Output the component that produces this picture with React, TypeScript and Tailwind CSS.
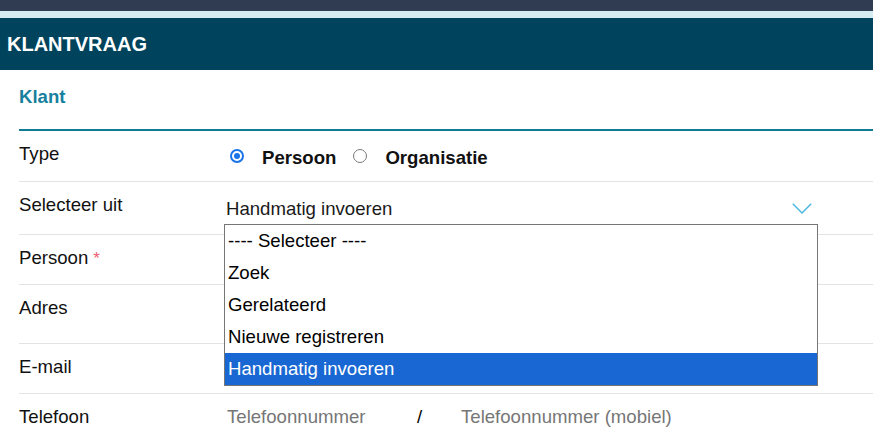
import React from "react";

function Radio({ checked }: { checked: boolean }) {
  return checked ? (
    <span className="w-[14px] h-[14px] mb-[4px] rounded-full border-2 border-[#1a73e8] flex items-center justify-center shrink-0">
      <span className="w-[6px] h-[6px] rounded-full bg-[#1a73e8]" />
    </span>
  ) : (
    <span className="w-[14px] h-[14px] mb-[4px] rounded-full border border-[#7a7a7a] bg-white shrink-0" />
  );
}

const options = [
  "---- Selecteer ----",
  "Zoek",
  "Gerelateerd",
  "Nieuwe registreren",
  "Handmatig invoeren",
];

export default function App() {
  return (
    <div className="w-[873px] h-[438px] overflow-hidden bg-white font-['Liberation_Sans',Arial,sans-serif] text-[18.6px] text-[#111]">
      <div className="h-[11px] bg-[#2f3c52]" />
      <div className="h-[7px] bg-[#d4ecef]" />
      <div className="h-[52px] bg-[#00435c] flex items-center px-[7px]">
        <h1 className="text-[20px] font-bold text-white leading-none">KLANTVRAAG</h1>
      </div>
      <div className="pl-[19px]">
        <div className="h-[61px] border-b-2 border-[#0f7b94] pt-[16px]">
          <h2 className="font-bold text-[#17809d] leading-[22px]">Klant</h2>
        </div>

        {/* Type */}
        <div className="h-[51px] border-b border-[#e3e3e3] flex">
          <div className="w-[205px] pt-[12px] leading-[22px]">Type</div>
          <div className="flex-1 pt-[16px] leading-[22px] flex items-center h-[22px] box-content pl-[6px] font-bold">
            <Radio checked />
            <span className="ml-[18px]">Persoon</span>
            <span className="ml-[17px] flex items-center">
              <Radio checked={false} />
            </span>
            <span className="ml-[18px]">Organisatie</span>
          </div>
        </div>

        {/* Selecteer uit */}
        <div className="h-[53px] border-b border-[#e3e3e3] flex">
          <div className="w-[205px] pt-[12px] leading-[22px]">Selecteer uit</div>
          <div className="relative w-[594px]">
            <div className="pt-[16px] pl-[2px] leading-[22px] flex items-center text-[#1a1a1a]">
              <span>Handmatig invoeren</span>
              <svg
                className="ml-auto mr-[6px] mb-[2px]"
                width="20"
                height="11"
                viewBox="0 0 20 11"
                fill="none"
              >
                <polyline
                  points="0.8,0.8 10,10 19.2,0.8"
                  stroke="#46b5de"
                  strokeWidth="1.4"
                />
              </svg>
            </div>
            <ul className="absolute left-0 top-[42px] w-[594px] border border-[#767676] bg-white z-10">
              {options.map((o, i) => (
                <li
                  key={o}
                  className={
                    "h-[32px] leading-[32px] pl-[3px] " +
                    (i === options.length - 1 ? "bg-[#1967d2] text-white" : "text-black")
                  }
                >
                  {o}
                </li>
              ))}
            </ul>
          </div>
        </div>

        {/* Persoon */}
        <div className="h-[50px] border-b border-[#e3e3e3] flex">
          <div className="w-[205px] pt-[12px] leading-[22px]">
            Persoon
            <span className="ml-[5px] text-[17px] text-[#ee5f72]">*</span>
          </div>
        </div>

        {/* Adres */}
        <div className="h-[59px] border-b border-[#e3e3e3] flex">
          <div className="w-[205px] pt-[12px] leading-[22px]">Adres</div>
        </div>

        {/* E-mail */}
        <div className="h-[50px] border-b border-[#e3e3e3] flex">
          <div className="w-[205px] pt-[12px] leading-[22px]">E-mail</div>
        </div>

        {/* Telefoon */}
        <div className="h-[50px] flex">
          <div className="w-[205px] pt-[12px] leading-[22px]">Telefoon</div>
          <div className="flex pt-[12px] leading-[22px]">
            <span className="w-[193px] pl-[3px] text-[#767676]">Telefoonnummer</span>
            <span className="w-[41px] text-black">/</span>
            <span className="pl-[3px] text-[#767676]">Telefoonnummer (mobiel)</span>
          </div>
        </div>
      </div>
    </div>
  );
}
